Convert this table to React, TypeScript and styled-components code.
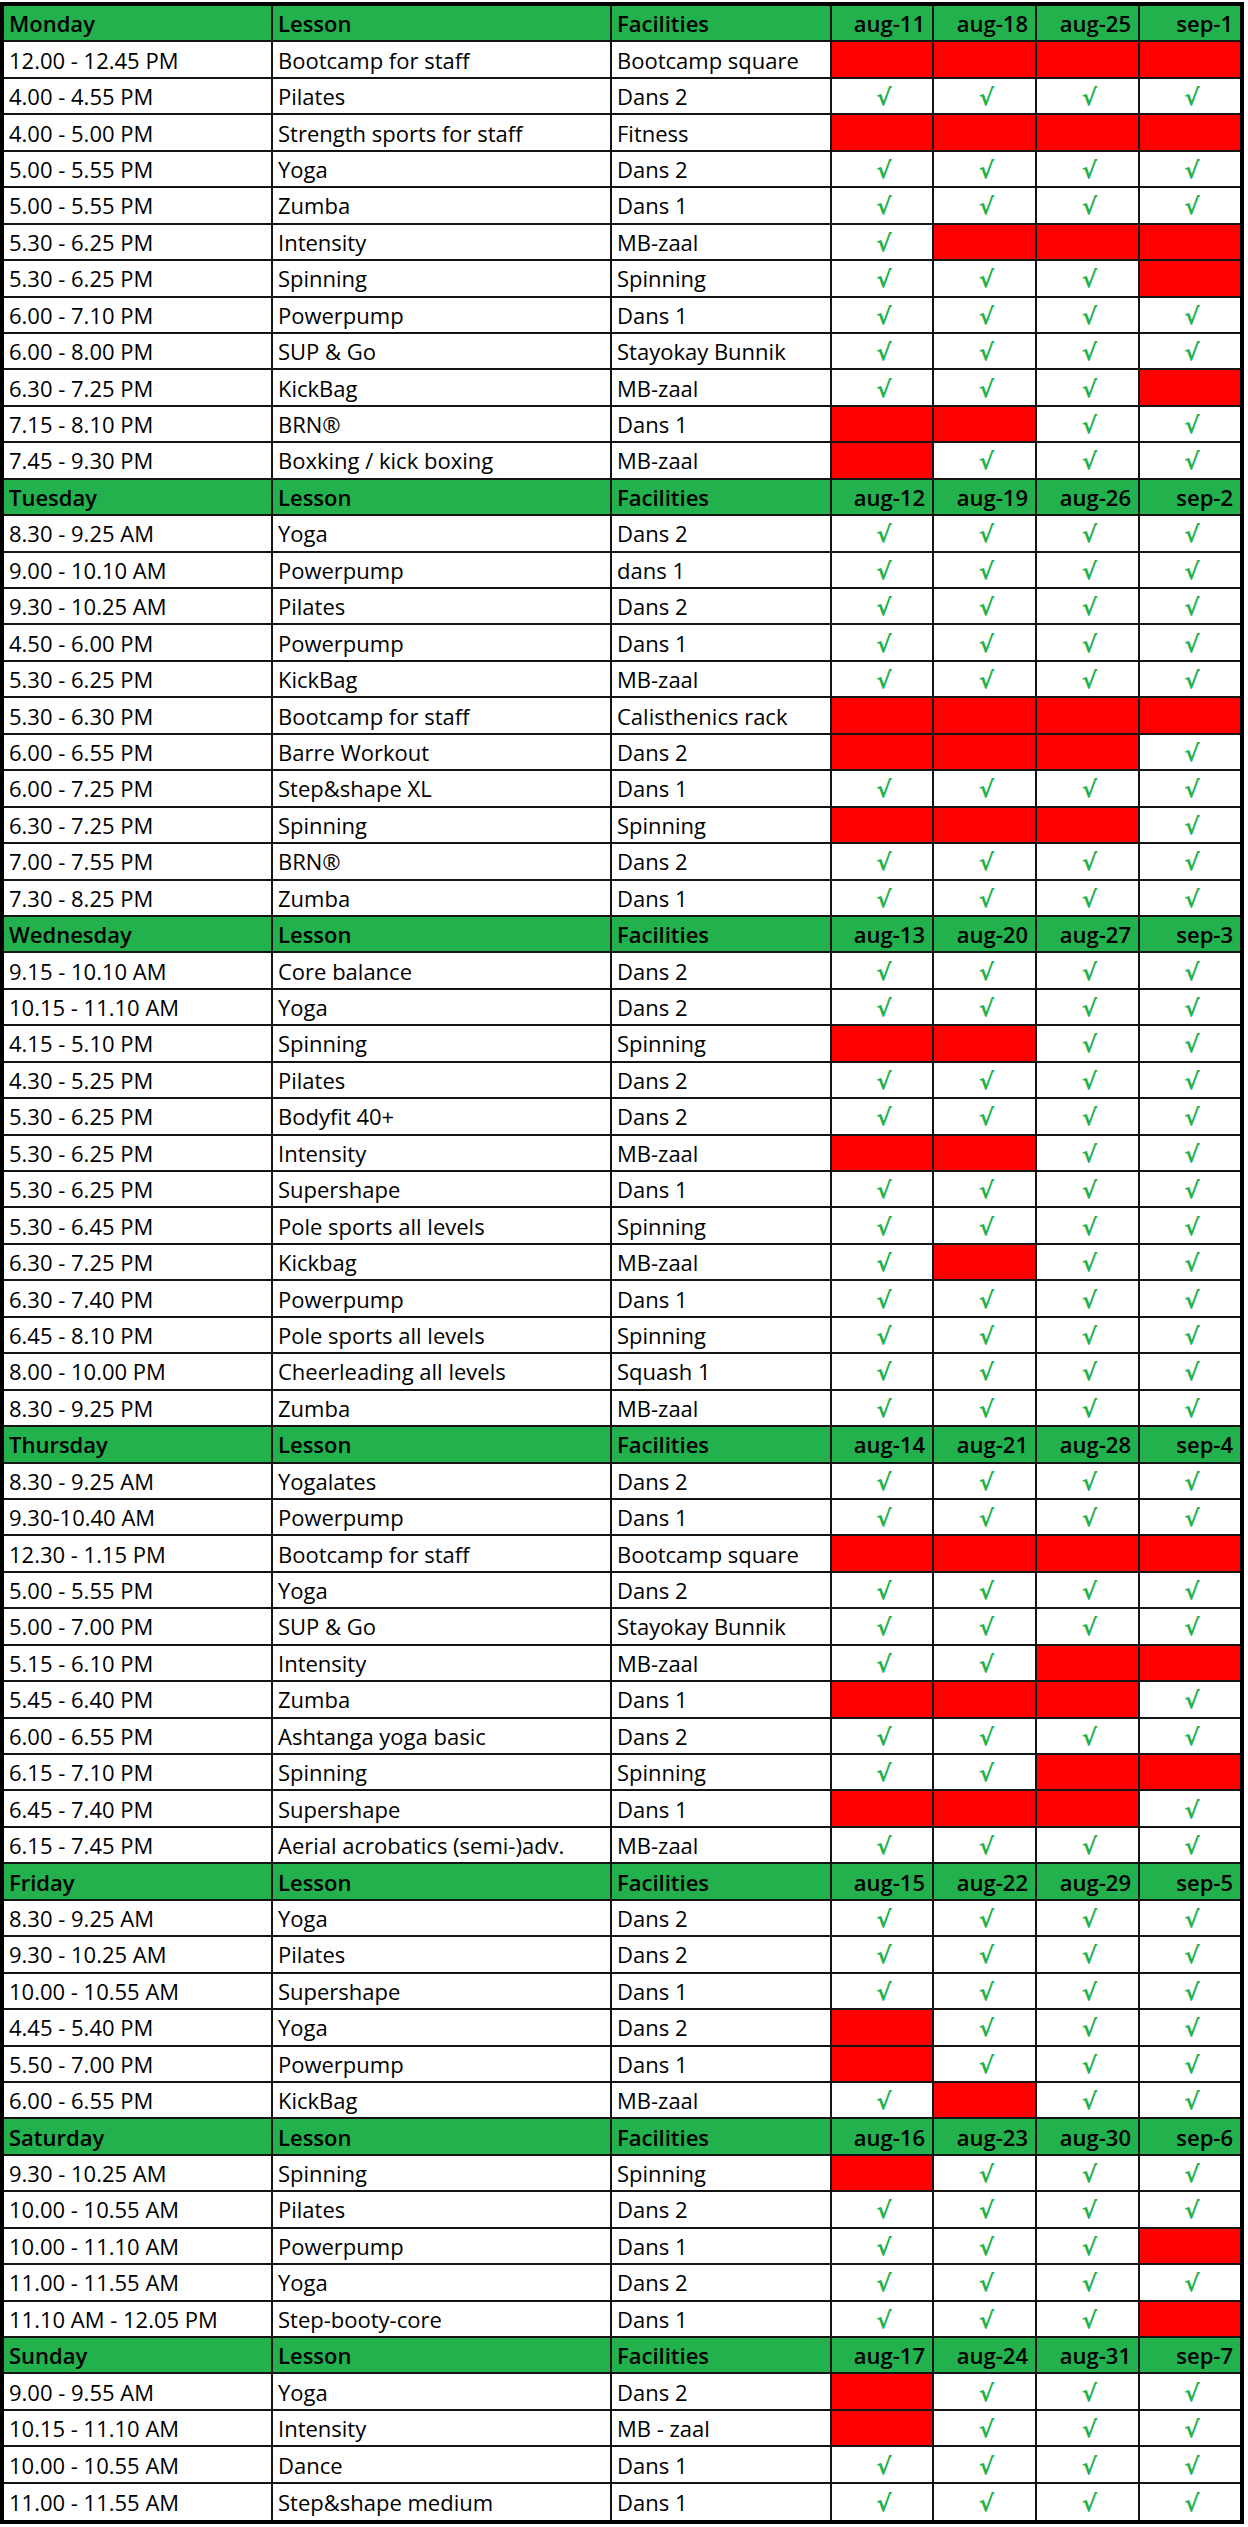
import React from "react";
import styled, { createGlobalStyle } from "styled-components";

const GlobalStyle = createGlobalStyle`
  html, body {
    margin: 0;
    padding: 0;
    background: #ffffff;
  }
  body {
    font-family: "Open Sans", "Liberation Sans", sans-serif;
    color: #000;
  }
`;

type Status = "C" | "R";

interface Lesson {
  time: string;
  lesson: string;
  facility: string;
  status: string;
}

interface Day {
  name: string;
  dates: string[];
  rows: Lesson[];
}

const r = (time: string, lesson: string, facility: string, status: string): Lesson => ({
  time,
  lesson,
  facility,
  status,
});

const days: Day[] = [
  {
    name: "Monday",
    dates: ["aug-11", "aug-18", "aug-25", "sep-1"],
    rows: [
      r("12.00 - 12.45 PM", "Bootcamp for staff", "Bootcamp square", "RRRR"),
      r("4.00 - 4.55 PM", "Pilates", "Dans 2", "CCCC"),
      r("4.00 - 5.00 PM", "Strength sports for staff", "Fitness", "RRRR"),
      r("5.00 - 5.55 PM", "Yoga", "Dans 2", "CCCC"),
      r("5.00 - 5.55 PM", "Zumba", "Dans 1", "CCCC"),
      r("5.30 - 6.25 PM", "Intensity", "MB-zaal", "CRRR"),
      r("5.30 - 6.25 PM", "Spinning", "Spinning", "CCCR"),
      r("6.00 - 7.10 PM", "Powerpump", "Dans 1", "CCCC"),
      r("6.00 - 8.00 PM", "SUP & Go", "Stayokay Bunnik", "CCCC"),
      r("6.30 - 7.25 PM", "KickBag", "MB-zaal", "CCCR"),
      r("7.15 - 8.10 PM", "BRN®", "Dans 1", "RRCC"),
      r("7.45 - 9.30 PM", "Boxking / kick boxing", "MB-zaal", "RCCC"),
    ],
  },
  {
    name: "Tuesday",
    dates: ["aug-12", "aug-19", "aug-26", "sep-2"],
    rows: [
      r("8.30 - 9.25 AM", "Yoga", "Dans 2", "CCCC"),
      r("9.00 - 10.10 AM", "Powerpump", "dans 1", "CCCC"),
      r("9.30 - 10.25 AM", "Pilates", "Dans 2", "CCCC"),
      r("4.50 - 6.00 PM", "Powerpump", "Dans 1", "CCCC"),
      r("5.30 - 6.25 PM", "KickBag", "MB-zaal", "CCCC"),
      r("5.30 - 6.30 PM", "Bootcamp for staff", "Calisthenics rack", "RRRR"),
      r("6.00 - 6.55 PM", "Barre Workout", "Dans 2", "RRRC"),
      r("6.00 - 7.25 PM", "Step&shape XL", "Dans 1", "CCCC"),
      r("6.30 - 7.25 PM", "Spinning", "Spinning", "RRRC"),
      r("7.00 - 7.55 PM", "BRN®", "Dans 2", "CCCC"),
      r("7.30 - 8.25 PM", "Zumba", "Dans 1", "CCCC"),
    ],
  },
  {
    name: "Wednesday",
    dates: ["aug-13", "aug-20", "aug-27", "sep-3"],
    rows: [
      r("9.15 - 10.10 AM", "Core balance", "Dans 2", "CCCC"),
      r("10.15 - 11.10 AM", "Yoga", "Dans 2", "CCCC"),
      r("4.15 - 5.10 PM", "Spinning", "Spinning", "RRCC"),
      r("4.30 - 5.25 PM", "Pilates", "Dans 2", "CCCC"),
      r("5.30 - 6.25 PM", "Bodyfit 40+", "Dans 2", "CCCC"),
      r("5.30 - 6.25 PM", "Intensity", "MB-zaal", "RRCC"),
      r("5.30 - 6.25 PM", "Supershape", "Dans 1", "CCCC"),
      r("5.30 - 6.45 PM", "Pole sports all levels", "Spinning", "CCCC"),
      r("6.30 - 7.25 PM", "Kickbag", "MB-zaal", "CRCC"),
      r("6.30 - 7.40 PM", "Powerpump", "Dans 1", "CCCC"),
      r("6.45 - 8.10 PM", "Pole sports all levels", "Spinning", "CCCC"),
      r("8.00 - 10.00 PM", "Cheerleading all levels", "Squash 1", "CCCC"),
      r("8.30 - 9.25 PM", "Zumba", "MB-zaal", "CCCC"),
    ],
  },
  {
    name: "Thursday",
    dates: ["aug-14", "aug-21", "aug-28", "sep-4"],
    rows: [
      r("8.30 - 9.25 AM", "Yogalates", "Dans 2", "CCCC"),
      r("9.30-10.40 AM", "Powerpump", "Dans 1", "CCCC"),
      r("12.30 - 1.15 PM", "Bootcamp for staff", "Bootcamp square", "RRRR"),
      r("5.00 - 5.55 PM", "Yoga", "Dans 2", "CCCC"),
      r("5.00 - 7.00 PM", "SUP & Go", "Stayokay Bunnik", "CCCC"),
      r("5.15 - 6.10 PM", "Intensity", "MB-zaal", "CCRR"),
      r("5.45 - 6.40 PM", "Zumba", "Dans 1", "RRRC"),
      r("6.00 - 6.55 PM", "Ashtanga yoga basic", "Dans 2", "CCCC"),
      r("6.15 - 7.10 PM", "Spinning", "Spinning", "CCRR"),
      r("6.45 - 7.40 PM", "Supershape", "Dans 1", "RRRC"),
      r("6.15 - 7.45 PM", "Aerial acrobatics (semi-)adv.", "MB-zaal", "CCCC"),
    ],
  },
  {
    name: "Friday",
    dates: ["aug-15", "aug-22", "aug-29", "sep-5"],
    rows: [
      r("8.30 - 9.25 AM", "Yoga", "Dans 2", "CCCC"),
      r("9.30 - 10.25 AM", "Pilates", "Dans 2", "CCCC"),
      r("10.00 - 10.55 AM", "Supershape", "Dans 1", "CCCC"),
      r("4.45 - 5.40 PM", "Yoga", "Dans 2", "RCCC"),
      r("5.50 - 7.00 PM", "Powerpump", "Dans 1", "RCCC"),
      r("6.00 - 6.55 PM", "KickBag", "MB-zaal", "CRCC"),
    ],
  },
  {
    name: "Saturday",
    dates: ["aug-16", "aug-23", "aug-30", "sep-6"],
    rows: [
      r("9.30 - 10.25 AM", "Spinning", "Spinning", "RCCC"),
      r("10.00 - 10.55 AM", "Pilates", "Dans 2", "CCCC"),
      r("10.00 - 11.10 AM", "Powerpump", "Dans 1", "CCCR"),
      r("11.00 - 11.55 AM", "Yoga", "Dans 2", "CCCC"),
      r("11.10 AM - 12.05 PM", "Step-booty-core", "Dans 1", "CCCR"),
    ],
  },
  {
    name: "Sunday",
    dates: ["aug-17", "aug-24", "aug-31", "sep-7"],
    rows: [
      r("9.00 - 9.55 AM", "Yoga", "Dans 2", "RCCC"),
      r("10.15 - 11.10 AM", "Intensity", "MB - zaal", "RCCC"),
      r("10.00 - 10.55 AM", "Dance", "Dans 1", "CCCC"),
      r("11.00 - 11.55 AM", "Step&shape medium", "Dans 1", "CCCC"),
    ],
  },
];

const GREEN = "#22b14c";
const RED = "#ff0000";
const LINE = "#141414";

const Page = styled.div`
  padding-top: 2px;
  width: 1244px;
`;

const Table = styled.table`
  width: 1244px;
  border-collapse: separate;
  border-spacing: 0;
  border: 4px solid #000;
  table-layout: fixed;
  font-family: "Open Sans", "Liberation Sans", sans-serif;
  font-size: 22px;
  line-height: 1;
`;

const Row = styled.tr`
  height: 36.45px;
`;

const Cell = styled.td<{ $last?: boolean; $bottom?: boolean }>`
  box-sizing: border-box;
  height: 36.45px;
  padding: 0 4px 0 5px;
  border-right: ${(p) => (p.$last ? "none" : `2px solid ${LINE}`)};
  border-bottom: ${(p) => (p.$bottom ? "none" : `2px solid ${LINE}`)};
  white-space: nowrap;
  overflow: hidden;
  vertical-align: middle;
  background: #fff;
`;

const HeadCell = styled(Cell)<{ $right?: boolean }>`
  background: ${GREEN};
  font-weight: 600;
  text-align: ${(p) => (p.$right ? "right" : "left")};
  padding-right: ${(p) => (p.$right ? "7px" : "4px")};
`;

const StatusCell = styled(Cell)<{ $status: Status }>`
  background: ${(p) => (p.$status === "R" ? RED : "#fff")};
  text-align: center;
  padding: 0;
`;

const Check = styled.span`
  display: inline-block;
  color: ${GREEN};
  font-family: "DejaVu Sans", sans-serif;
  font-size: 23px;
  font-weight: 700;
  line-height: 1;
  transform: translate(2px, 1px);
`;

const widths = [269, 339, 220, 102, 103, 103, 100];

export default function App() {
  const total = days.reduce((n, d) => n + d.rows.length + 1, 0);
  let idx = 0;
  return (
    <Page>
      <GlobalStyle />
      <Table>
        <colgroup>
          {widths.map((w, i) => (
            <col key={i} style={{ width: w }} />
          ))}
        </colgroup>
        <tbody>
          {days.map((day) => {
            const headIdx = idx++;
            const headLast = headIdx === total - 1;
            return (
              <React.Fragment key={day.name}>
                <Row>
                  <HeadCell $bottom={headLast}>{day.name}</HeadCell>
                  <HeadCell $bottom={headLast}>Lesson</HeadCell>
                  <HeadCell $bottom={headLast}>Facilities</HeadCell>
                  {day.dates.map((d, i) => (
                    <HeadCell key={d} $right $last={i === 3} $bottom={headLast}>
                      {d}
                    </HeadCell>
                  ))}
                </Row>
                {day.rows.map((row, ri) => {
                  const rowIdx = idx++;
                  const isLast = rowIdx === total - 1;
                  return (
                    <Row key={ri}>
                      <Cell $bottom={isLast}>{row.time}</Cell>
                      <Cell $bottom={isLast}>{row.lesson}</Cell>
                      <Cell $bottom={isLast}>{row.facility}</Cell>
                      {row.status.split("").map((s, si) => (
                        <StatusCell
                          key={si}
                          $status={s as Status}
                          $last={si === 3}
                          $bottom={isLast}
                        >
                          {s === "C" ? <Check>√</Check> : null}
                        </StatusCell>
                      ))}
                    </Row>
                  );
                })}
              </React.Fragment>
            );
          })}
        </tbody>
      </Table>
    </Page>
  );
}
